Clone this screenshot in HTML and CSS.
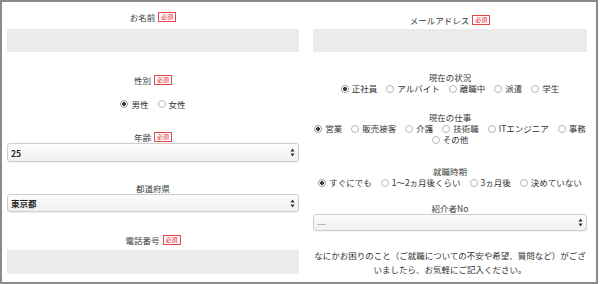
FILE: index.html
```html
<!DOCTYPE html>
<html lang="ja">
<head>
<meta charset="utf-8">
<link rel="stylesheet" href="styles.css">
</head>
<body>
<div class="frame">
  <div class="col col-left">
    <div class="label l-name">お名前<span class="req">必須</span></div>
    <div class="field f-name"></div>

    <div class="label l-sex">性別<span class="req">必須</span></div>
    <div class="radios r-sex">
      <label class="opt"><input type="radio" name="sex" checked>男性</label>
      <label class="opt"><input type="radio" name="sex">女性</label>
    </div>

    <div class="label l-age">年齢<span class="req">必須</span></div>
    <div class="select s-age"><span class="val">25</span><svg class="arr" width="5" height="9" viewBox="0 0 5 9"><path d="M2.5 0.5L4.6 3.6H0.4Z M2.5 8.5L4.6 5.4H0.4Z" fill="#333"/></svg></div>

    <div class="label l-pref">都道府県</div>
    <div class="select s-pref"><span class="val">東京都</span><svg class="arr" width="5" height="9" viewBox="0 0 5 9"><path d="M2.5 0.5L4.6 3.6H0.4Z M2.5 8.5L4.6 5.4H0.4Z" fill="#333"/></svg></div>

    <div class="label l-tel">電話番号<span class="req">必須</span></div>
    <div class="field f-tel"></div>
  </div>

  <div class="col col-right">
    <div class="label l-mail">メールアドレス<span class="req">必須</span></div>
    <div class="field f-mail"></div>

    <div class="label g-label l-status">現在の状況</div>
    <div class="radios g-row">
      <label class="opt"><input type="radio" name="st" checked>正社員</label>
      <label class="opt"><input type="radio" name="st">アルバイト</label>
      <label class="opt"><input type="radio" name="st">離職中</label>
      <label class="opt"><input type="radio" name="st">派遣</label>
      <label class="opt"><input type="radio" name="st">学生</label>
    </div>

    <div class="label g-label l-job">現在の仕事</div>
    <div class="radios g-row">
      <label class="opt"><input type="radio" name="job" checked>営業</label>
      <label class="opt"><input type="radio" name="job">販売接客</label>
      <label class="opt"><input type="radio" name="job">介護</label>
      <label class="opt"><input type="radio" name="job">技術職</label>
      <label class="opt"><input type="radio" name="job">ITエンジニア</label>
      <label class="opt"><input type="radio" name="job">事務</label>
      <span class="break"></span>
      <label class="opt"><input type="radio" name="job">その他</label>
    </div>

    <div class="label g-label l-when">就職時期</div>
    <div class="radios g-row">
      <label class="opt"><input type="radio" name="when" checked>すぐにでも</label>
      <label class="opt"><input type="radio" name="when">1〜2ヵ月後くらい</label>
      <label class="opt"><input type="radio" name="when">3ヵ月後</label>
      <label class="opt"><input type="radio" name="when">決めていない</label>
    </div>

    <div class="label l-ref">紹介者No</div>
    <div class="select s-ref"><span class="val muted">---</span><svg class="arr" width="5" height="9" viewBox="0 0 5 9"><path d="M2.5 0.5L4.6 3.6H0.4Z M2.5 8.5L4.6 5.4H0.4Z" fill="#333"/></svg></div>

    <p class="note">なにかお困りのこと（ご就職についての不安や希望、質問など）がござ<br>いましたら、お気軽にご記入ください。</p>
  </div>
</div>
</body>
</html>
```

FILE: styles.css
```css
* { box-sizing: border-box; }

html, body {
  margin: 0;
  padding: 0;
  background: #fff;
}

body {
  font-family: "Noto Sans CJK JP", "Noto Sans", sans-serif;
  font-size: 8.5px;
  color: #333;
}

.frame {
  width: 598px;
  height: 284px;
  border: 2px solid #8a8a8a;
  display: grid;
  grid-template-columns: 304px 1fr;
  overflow: hidden;
}

.col {
  display: flex;
  flex-direction: column;
}

.col-left { padding: 0 7px 0 5px; }
.col-right { padding: 0 9px 0 7px; }

.label {
  display: flex;
  justify-content: center;
  align-items: center;
  height: 12px;
  line-height: 12px;
  color: #3a3a3a;
}

.req {
  display: inline-block;
  margin-left: 3px;
  padding: 0 2px;
  height: 10px;
  line-height: 8px;
  font-size: 6px;
  color: #e0161b;
  border: 1px solid #e8454a;
  background: #fff;
}

.field {
  background: #ebebeb;
  height: 23px;
}

.select {
  display: flex;
  align-items: center;
  justify-content: space-between;
  height: 19px;
  padding: 0 3px 0 3px;
  border: 1px solid #cdcdcd;
  border-radius: 3px;
  background: linear-gradient(#fdfdfd, #f0f0f0);
  box-shadow: 0 1px 1px rgba(0, 0, 0, 0.06);
}

.select .val {
  font-weight: bold;
  color: #222;
  font-size: 8.5px;
}

.select .val.muted {
  font-weight: normal;
  color: #777;
}

.radios {
  display: flex;
  flex-wrap: wrap;
  justify-content: center;
  column-gap: 9px;
  line-height: 12px;
}

.opt {
  display: inline-flex;
  align-items: center;
  white-space: nowrap;
}

.opt input {
  -webkit-appearance: none;
  appearance: none;
  margin: 0 3px 0 0;
  width: 8px;
  height: 8px;
  border: 1px solid #b8b8b8;
  border-radius: 50%;
  background: #fff;
}

.opt input:checked {
  background: radial-gradient(circle, #3a3a3a 0 1.6px, #fff 2.2px);
  border-color: #9a9a9a;
}

.break { flex-basis: 100%; height: 0; }

/* left column vertical rhythm */
.l-name { margin-top: 9px; }
.f-name { margin-top: 6px; }
.l-sex { margin-top: 22px; }
.r-sex { margin-top: 12px; }
.l-age { margin-top: 22px; height: 10px; line-height: 10px; }
.s-age { margin-top: 1px; }
.l-pref { margin-top: 20px; }
.s-pref { height: 18px; }
.l-tel { margin-top: 22px; }
.f-tel { margin-top: 4px; height: 24px; }

/* right column */
.l-mail { margin-top: 12px; }
.f-mail { margin-top: 3px; }

.g-label { height: 11px; line-height: 11px; }
.g-row { line-height: 11px; }

.l-status { margin-top: 20px; }
.l-job { margin-top: 18px; }
.l-when { margin-top: 21px; }
.l-ref { margin-top: 15px; height: 11px; line-height: 11px; }

.s-ref { height: 17px; }

.note {
  margin: 17px 0 0;
  text-align: center;
  line-height: 14px;
  color: #333;
}
```
